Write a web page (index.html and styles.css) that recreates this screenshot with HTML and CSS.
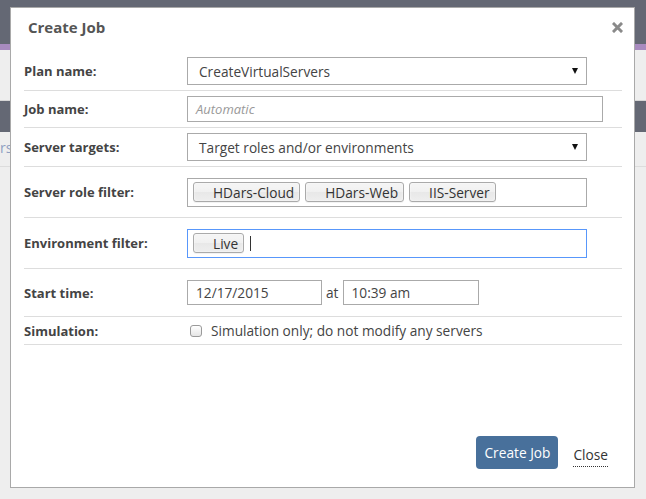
FILE: index.html
```html
<!DOCTYPE html>
<html lang="en">
<head>
<meta charset="utf-8">
<title>Create Job</title>
<link rel="stylesheet" href="styles.css">
</head>
<body>
<div class="page">
  <div class="topbar"></div>
  <div class="accent"></div>
  <div class="nav"></div>
  <div class="subbar"></div>
  <div class="crumb"><span class="crumb-text">rs</span></div>
</div>

<div class="dialog">
  <div class="dialog-header">
    <span class="dialog-title">Create Job</span>
    <svg class="dialog-close" width="11" height="11" viewBox="0 0 11 11"><path d="M2 2 L9 9 M9 2 L2 9" stroke="#8a8a8a" stroke-width="3" stroke-linecap="square"/></svg>
  </div>
  <div class="form">
    <div class="row row-plan">
      <label class="label">Plan name:</label>
      <div class="select"><span>CreateVirtualServers</span><span class="arrow"></span></div>
    </div>
    <div class="row row-job">
      <label class="label">Job name:</label>
      <div class="input input-wide"><span class="placeholder">Automatic</span></div>
    </div>
    <div class="row row-targets">
      <label class="label">Server targets:</label>
      <div class="select"><span>Target roles and/or environments</span><span class="arrow"></span></div>
    </div>
    <div class="row row-tags">
      <label class="label">Server role filter:</label>
      <div class="tagbox">
        <span class="tag">HDars-Cloud</span>
        <span class="tag">HDars-Web</span>
        <span class="tag">IIS-Server</span>
      </div>
    </div>
    <div class="row row-tags">
      <label class="label">Environment filter:</label>
      <div class="tagbox tagbox-focus">
        <span class="tag">Live</span>
        <span class="cursor"></span>
      </div>
    </div>
    <div class="row row-time">
      <label class="label">Start time:</label>
      <div class="input input-date">12/17/2015</div>
      <span class="at">at</span>
      <div class="input input-time">10:39 am</div>
    </div>
    <div class="row row-sim">
      <label class="label">Simulation:</label>
      <span class="checkbox"></span>
      <span class="check-text">Simulation only; do not modify any servers</span>
    </div>
  </div>
  <div class="dialog-footer">
    <button class="btn-primary">Create Job</button>
    <a class="link-close">Close</a>
  </div>
</div>
</body>
</html>
```

FILE: styles.css
```css
* { box-sizing: border-box; }
html, body { margin: 0; padding: 0; }
body {
  background: #eeeeee;
  font-family: "Open Sans", sans-serif;
  font-size: 13.7px;
  color: #444;
  width: 646px;
  height: 499px;
  overflow: hidden;
  position: relative;
}
.topbar { height: 44px; background: #646874; }
.accent { height: 6px; background: #a88bbf; }
.nav { height: 51px; border-bottom: 1px solid #d6d6d6; }
.subbar { height: 31px; background: #646874; }
.crumb {
  height: 35px;
  border-bottom: 1px solid #dcdcdc;
  display: flex;
  align-items: center;
  padding-bottom: 4px;
}
.crumb-text { color: #8e9fc2; font-size: 14px; }

.dialog {
  position: absolute;
  left: 10px;
  top: 7px;
  width: 625px;
  height: 481px;
  background: #fff;
  border: 1px solid #a9a9a9;
  display: flex;
  flex-direction: column;
}
.dialog-header {
  height: 38px;
  display: flex;
  align-items: center;
  justify-content: space-between;
  padding: 0 11px 0 17px;
}
.dialog-title { font-size: 15px; font-weight: 700; color: #555; }
.dialog-close { display: block; }

.form { margin-top: 6px; padding: 0 12px 0 13px; }
.row {
  display: flex;
  align-items: center;
  border-bottom: 1px solid #dddddd;
  box-sizing: content-box;
}
.row-plan { height: 38px; }
.row-job { height: 36px; }
.row-targets { height: 38px; }
.row-tags { height: 50px; }
.row-time { height: 47px; }
.row-sim { height: 27px; }

.label { width: 163px; flex: none; font-weight: 700; font-size: 13px; color: #444; }

.select {
  width: 400px;
  height: 28px;
  border: 1px solid #aaa;
  display: flex;
  align-items: center;
  justify-content: space-between;
  padding: 0 8px 0 11px;
  color: #444;
}
.arrow {
  width: 0; height: 0;
  border-left: 3px solid transparent;
  border-right: 3px solid transparent;
  border-top: 6px solid #111;
}
.input {
  height: 26px;
  border: 1px solid #aaa;
  display: flex;
  align-items: center;
  padding-left: 8px;
  color: #444;
}
.input-wide { width: 416px; }
.placeholder { font-style: italic; color: #999; font-size: 13px; }
.input-date { width: 135px; height: 25px; }
.input-time { width: 136px; height: 25px; }
.at { margin: 0 4px; color: #444; }

.tagbox {
  width: 400px;
  height: 29px;
  border: 1px solid #aaa;
  display: flex;
  align-items: center;
  gap: 5px;
  padding: 0 5px;
}
.tagbox-focus { border-color: #5897fb; }
.tag {
  height: 20px;
  display: flex;
  align-items: center;
  padding: 0 5px 0 19px;
  border: 1px solid #aaa;
  border-radius: 3px;
  background: linear-gradient(#f4f4f4 20%, #f0f0f0 50%, #e8e8e8 52%, #eeeeee 100%);
  box-shadow: 0 0 2px #fff inset, 0 1px 0 rgba(0,0,0,0.05);
  color: #333;
}
.cursor { width: 1px; height: 15px; background: #333; margin-left: 1px; }

.checkbox {
  width: 12px;
  height: 12px;
  margin-left: 3px;
  border: 1px solid #9a9a9a;
  border-radius: 3px;
  background: linear-gradient(#fff, #e6e6e6);
}
.check-text { margin-left: 9px; color: #444; }

.dialog-footer {
  margin-top: auto;
  display: flex;
  justify-content: flex-end;
  align-items: center;
  gap: 15px;
  padding: 0 26px 18px 0;
}
.btn-primary {
  width: 82px;
  height: 33px;
  border: none;
  border-radius: 4px;
  background: #48709b;
  color: #fff;
  font-family: inherit;
  font-size: 13.7px;
}
.link-close {
  color: #333;
  border-bottom: 1px dotted #333;
  padding-bottom: 2px;
  margin-top: 6px;
}
```
